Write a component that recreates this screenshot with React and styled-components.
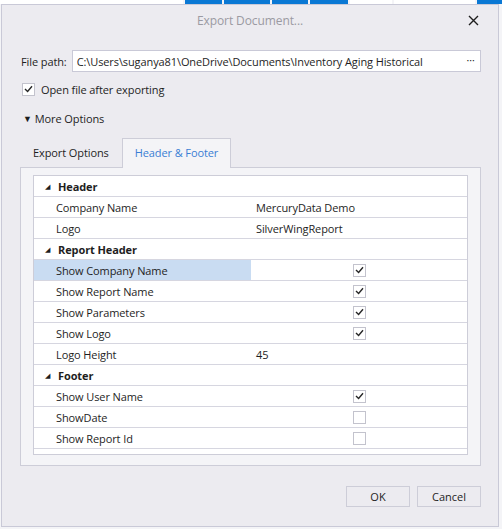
import React, { useState } from "react";
import styled, { createGlobalStyle } from "styled-components";

const GlobalStyle = createGlobalStyle`
  html, body {
    margin: 0;
    padding: 0;
    background: #f4f4f7;
  }
  body {
    font-family: "Segoe UI", "Open Sans", "Noto Sans", sans-serif;
    font-size: 11px;
    letter-spacing: -0.1px;
    color: #1e1e1e;
  }
`;

const rows = [
  { group: "Header" },
  { name: "Company Name", value: "MercuryData Demo" },
  { name: "Logo", value: "SilverWingReport" },
  { group: "Report Header" },
  { name: "Show Company Name", check: true, selected: true },
  { name: "Show Report Name", check: true },
  { name: "Show Parameters", check: true },
  { name: "Show Logo", check: true },
  { name: "Logo Height", value: "45" },
  { group: "Footer" },
  { name: "Show User Name", check: true },
  { name: "ShowDate", check: false },
  { name: "Show Report Id", check: false },
];

const stripCells = [
  { w: 183, blue: false },
  { w: 37, blue: true },
  { w: 46, blue: true },
  { w: 36, blue: true },
  { w: 38, blue: true },
  { w: 42, blue: false },
  { w: 81, blue: false },
  { w: 31, blue: true },
];

function CheckIcon() {
  return (
    <svg width="9" height="8" viewBox="0 0 9 8">
      <path d="M1 4 L3.6 6.5 L8 1.3" fill="none" stroke="#262626" strokeWidth="1.4" />
    </svg>
  );
}

function App() {
  const [openAfter, setOpenAfter] = useState(true);
  const [tab, setTab] = useState("header");

  return (
    <>
      <GlobalStyle />
      <Strip>
        {stripCells.map((c, i) => (
          <StripCell key={i} $blue={c.blue} style={{ width: c.w }} />
        ))}
      </Strip>
      <Dialog>
        <TitleBar>
          <span />
          <Title>Export Document...</Title>
          <CloseButton aria-label="Close">
            <svg width="11" height="11" viewBox="0 0 11 11">
              <path d="M1 1 L10 10 M10 1 L1 10" stroke="#1e1e1e" strokeWidth="1.4" />
            </svg>
          </CloseButton>
        </TitleBar>

        <Body>
          <PathRow>
            <Label>File path:</Label>
            <PathBox>
              <PathText>C:\Users\suganya81\OneDrive\Documents\Inventory Aging Historical</PathText>
              <Dots>•••</Dots>
            </PathBox>
          </PathRow>

          <CheckRow onClick={() => setOpenAfter(!openAfter)}>
            <Box>{openAfter && <CheckIcon />}</Box>
            <span>Open file after exporting</span>
          </CheckRow>

          <Expander>
            <Caret>▼</Caret>
            <span>More Options</span>
          </Expander>

          <Tabs>
            <Tab $active={tab === "export"} onClick={() => setTab("export")}>
              Export Options
            </Tab>
            <Tab $active={tab === "header"} onClick={() => setTab("header")}>
              Header &amp; Footer
            </Tab>
          </Tabs>

          <Panel>
            <Grid>
              {rows.map((r, i) =>
                r.group ? (
                  <GroupRow key={i}>
                    <Gutter>◢</Gutter>
                    <GroupName>{r.group}</GroupName>
                  </GroupRow>
                ) : (
                  <PropRow key={i}>
                    <NameCell $selected={r.selected}>{r.name}</NameCell>
                    <ValueCell $center={r.check !== undefined}>
                      {r.check !== undefined ? (
                        <Box>{r.check && <CheckIcon />}</Box>
                      ) : (
                        r.value
                      )}
                    </ValueCell>
                  </PropRow>
                )
              )}
              <GridTail />
            </Grid>
          </Panel>

          <Footer>
            <Button>OK</Button>
            <Button>Cancel</Button>
          </Footer>
        </Body>
      </Dialog>
    </>
  );
}

const Strip = styled.div`
  display: flex;
  height: 4px;
  gap: 2px;
  background: #f4f4f7;
`;

const StripCell = styled.div`
  height: 4px;
  flex-shrink: 0;
  background: ${(p) => (p.$blue ? "#0a78d4" : "#ffffff")};
`;

const Dialog = styled.div`
  margin-left: 1px;
  width: 496px;
  height: 521px;
  border: 1px solid #c9c9d7;
  background: #ecebf0;
  display: flex;
  flex-direction: column;
`;

const TitleBar = styled.div`
  display: grid;
  grid-template-columns: 1fr auto 1fr;
  align-items: center;
  height: 31px;
`;

const Title = styled.div`
  font-size: 12px;
  color: #9b9aa2;
`;

const CloseButton = styled.button`
  justify-self: end;
  margin-right: 17px;
  width: 16px;
  height: 16px;
  padding: 0;
  border: none;
  background: transparent;
  display: flex;
  align-items: center;
  justify-content: center;
`;

const Body = styled.div`
  display: flex;
  flex-direction: column;
  padding: 0 17px 0 18px;
  flex: 1;
`;

const PathRow = styled.div`
  display: flex;
  align-items: center;
  gap: 5px;
  margin-top: 14px;
`;

const Label = styled.span`
  margin-left: 1px;
`;

const PathBox = styled.div`
  flex: 1;
  height: 20px;
  border: 1px solid #c9c9d7;
  background: #ffffff;
  display: flex;
  align-items: center;
  padding: 0 5px 0 4px;
`;

const PathText = styled.span`
  flex: 1;
  white-space: nowrap;
  overflow: hidden;
`;

const Dots = styled.span`
  font-size: 6px;
  letter-spacing: 0.5px;
`;

const CheckRow = styled.label`
  display: flex;
  align-items: center;
  gap: 6px;
  margin: 9px 0 0 2px;
  height: 16px;
  cursor: pointer;
`;

const Box = styled.span`
  width: 11px;
  height: 11px;
  border: 1px solid #c3c3cd;
  background: #ffffff;
  display: inline-flex;
  align-items: center;
  justify-content: center;
  flex-shrink: 0;
`;

const Expander = styled.div`
  display: flex;
  align-items: center;
  gap: 3px;
  margin: 13px 0 0 3px;
  height: 16px;
`;

const Caret = styled.span`
  font-size: 9px;
`;

const Tabs = styled.div`
  display: flex;
  align-items: flex-end;
  margin-top: 10px;
  height: 32px;
  margin-bottom: -1px;
  position: relative;
`;

const Tab = styled.div`
  height: 30px;
  display: flex;
  align-items: center;
  padding: 0 12px 3px;
  box-sizing: border-box;
  color: ${(p) => (p.$active ? "#3b7ed4" : "#1e1e1e")};
  background: ${(p) => (p.$active ? "#f4f4f7" : "transparent")};
  border: 1px solid ${(p) => (p.$active ? "#cdcdd8" : "transparent")};
  border-bottom: none;
  cursor: pointer;
`;

const Panel = styled.div`
  border: 1px solid #cdcdd8;
  background: #f4f4f7;
  padding: 7px 12px 12px;
  height: 299px;
  box-sizing: border-box;
`;

const Grid = styled.div`
  border: 1px solid #cdcdd8;
  background: #ffffff;
`;

const GroupRow = styled.div`
  display: flex;
  align-items: center;
  height: 20px;
  border-bottom: 1px solid #d6d6e0;
`;

const Gutter = styled.span`
  width: 22px;
  font-size: 7px;
  text-align: center;
  padding-left: 2px;
`;

const GroupName = styled.span`
  font-weight: bold;
`;

const PropRow = styled.div`
  display: grid;
  grid-template-columns: 217px 1fr;
  height: 20px;
  border-bottom: 1px solid #d6d6e0;
`;

const NameCell = styled.div`
  display: flex;
  align-items: center;
  padding-left: 22px;
  background: ${(p) => (p.$selected ? "#c9dcf2" : "transparent")};
`;

const ValueCell = styled.div`
  display: flex;
  align-items: center;
  justify-content: ${(p) => (p.$center ? "center" : "flex-start")};
  padding-left: ${(p) => (p.$center ? "0" : "5px")};
`;

const GridTail = styled.div`
  height: 5px;
`;

const Footer = styled.div`
  display: flex;
  justify-content: flex-end;
  gap: 7px;
  margin-top: 20px;
`;

const Button = styled.button`
  width: 64px;
  height: 21px;
  border: 1px solid #cdcdd8;
  background: #ecebf0;
  font-family: inherit;
  font-size: 11px;
  color: #1e1e1e;
  padding: 0;
`;

export default App;
